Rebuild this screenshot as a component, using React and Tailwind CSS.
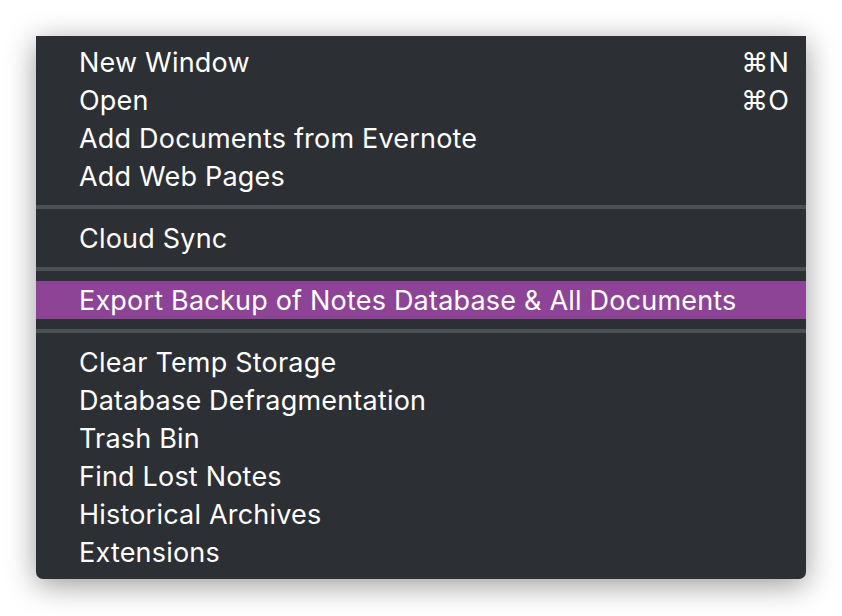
import React from "react";

const groups = [
  [
    { label: "New Window", shortcut: "⌘N" },
    { label: "Open", shortcut: "⌘O" },
    { label: "Add Documents from Evernote" },
    { label: "Add Web Pages" },
  ],
  [{ label: "Cloud Sync" }],
  [{ label: "Export Backup of Notes Database & All Documents", active: true }],
  [
    { label: "Clear Temp Storage" },
    { label: "Database Defragmentation" },
    { label: "Trash Bin" },
    { label: "Find Lost Notes" },
    { label: "Historical Archives" },
    { label: "Extensions" },
  ],
];

function Item({ label, shortcut, active }) {
  return (
    <div
      className={
        "flex h-[38px] items-center justify-between pl-[43px] pr-[17px] text-[27px] leading-none tracking-[0.2px] text-white " +
        (active ? "bg-[#8e4496]" : "")
      }
    >
      <span>{label}</span>
      {shortcut && <span>{shortcut}</span>}
    </div>
  );
}

export default function App() {
  return (
    <div className="h-[616px] w-[842px] bg-white pt-[36px] pl-[36px]" style={{ fontFamily: "Inter, 'Noto Sans', sans-serif" }}>
      <div className="w-[770px] rounded-b-[7px] bg-[#2c2f33] pt-[7px] pb-[8px] shadow-[0_6px_30px_rgba(0,0,0,0.4)]">
        {groups.map((g, gi) => (
          <React.Fragment key={gi}>
            {gi > 0 && <div className="my-[10px] h-[4px] bg-[#4c5053]" />}
            {g.map((it) => (
              <Item key={it.label} {...it} />
            ))}
          </React.Fragment>
        ))}
      </div>
    </div>
  );
}
